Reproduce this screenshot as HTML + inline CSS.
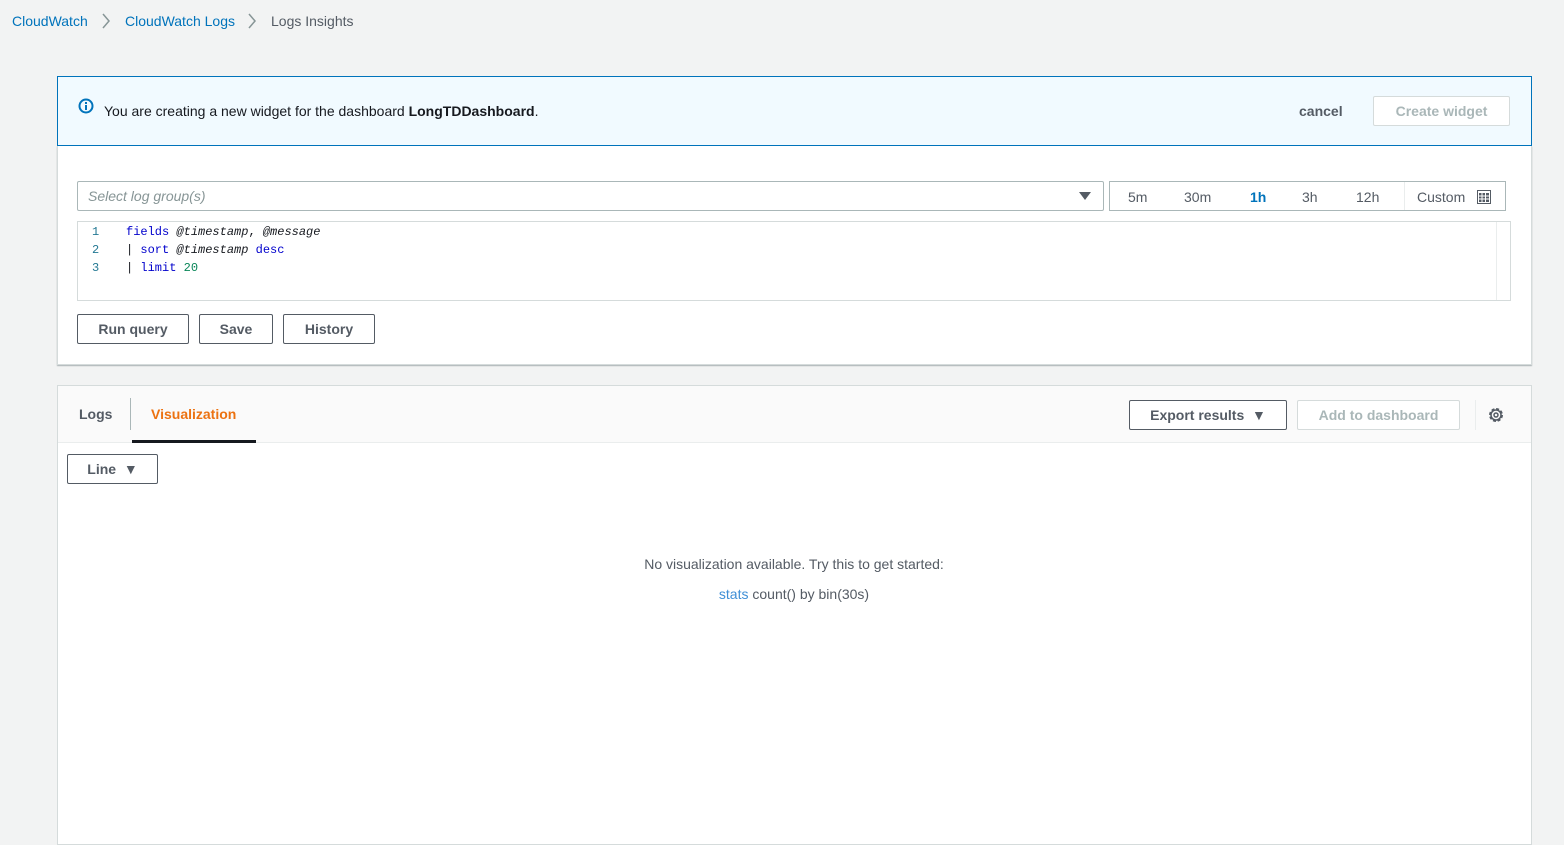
<!DOCTYPE html>
<html><head><meta charset="utf-8"><style>
*{box-sizing:border-box;margin:0;padding:0}
body{width:1564px;height:835px;background:#f2f3f3;font-family:"Liberation Sans",sans-serif;font-size:14px;color:#16191f;position:relative;overflow:hidden}
.a{position:absolute}
.blue{color:#0073bb}
.btn{position:absolute;border:1px solid #545b64;background:#fff;font-weight:bold;color:#545b64;text-align:center;font-size:14px;border-radius:2px}
.dis{border-color:#d5dbdb;color:#aab7b8}
.mono{font-family:"Liberation Mono",monospace;font-size:12px}
</style></head><body>
<div class="a blue" style="left:12px;top:13px">CloudWatch</div>
<svg class="a" style="left:101px;top:13px" width="10" height="16" viewBox="0 0 10 16"><path d="M2 1l6 7-6 7" fill="none" stroke="#879596" stroke-width="1.5"/></svg>
<div class="a blue" style="left:125px;top:13px">CloudWatch Logs</div>
<svg class="a" style="left:247px;top:13px" width="10" height="16" viewBox="0 0 10 16"><path d="M2 1l6 7-6 7" fill="none" stroke="#879596" stroke-width="1.5"/></svg>
<div class="a" style="left:271px;top:13px;color:#545b64">Logs Insights</div>

<div class="a" style="left:57px;top:76px;width:1475px;height:70px;background:#f1faff;border:1px solid #0073bb"></div>
<svg class="a" style="left:78px;top:98px" width="16" height="16" viewBox="0 0 16 16"><circle cx="8" cy="8" r="6.5" fill="none" stroke="#0073bb" stroke-width="2"/><rect x="7" y="7" width="2" height="5" fill="#0073bb"/><rect x="7" y="4" width="2" height="2" fill="#0073bb"/></svg>
<div class="a" style="left:104px;top:103px">You are creating a new widget for the dashboard <b>LongTDDashboard</b>.</div>
<div class="a" style="left:1299px;top:103px;font-weight:bold;color:#545b64">cancel</div>
<div class="btn dis" style="left:1373px;top:96px;width:137px;height:30px;line-height:28px">Create widget</div>

<div class="a" style="left:57px;top:146px;width:1475px;height:219px;background:#fff;border:1px solid #d5dbdb;border-top:none;box-shadow:0 1px 1px rgba(0,28,36,.3)"></div>
<div class="a" style="left:77px;top:181px;width:1027px;height:30px;border:1px solid #aab7b8;border-radius:2px;background:#fff"></div>
<div class="a" style="left:88px;top:188px;color:#879596;font-style:italic">Select log group(s)</div>
<div class="a" style="left:1079px;top:192px;width:0;height:0;border-left:6px solid transparent;border-right:6px solid transparent;border-top:8px solid #545b64"></div>
<div class="a" style="left:1109px;top:181px;width:397px;height:30px;border:1px solid #aab7b8;background:#fff"></div>
<div class="a" style="left:1404px;top:182px;width:1px;height:28px;background:#eaeded"></div>
<div class="a" style="left:1128px;top:189px;color:#545b64">5m</div>
<div class="a" style="left:1184px;top:189px;color:#545b64">30m</div>
<div class="a" style="left:1250px;top:189px;color:#0073bb;font-weight:bold">1h</div>
<div class="a" style="left:1302px;top:189px;color:#545b64">3h</div>
<div class="a" style="left:1356px;top:189px;color:#545b64">12h</div>
<div class="a" style="left:1417px;top:189px;color:#545b64">Custom</div>
<svg class="a" style="left:1477px;top:190px" width="14" height="14" viewBox="0 0 14 14"><rect x="0.5" y="0.5" width="13" height="13" fill="none" stroke="#545b64"/><path d="M2 3h10v9H2z" fill="#545b64"/><path d="M2 6h10M2 9h10M5 3v9M8.5 3v9" stroke="#fff" stroke-width="1"/></svg>

<div class="a" style="left:77px;top:221px;width:1434px;height:80px;border:1px solid #d5dbdb;background:#fff"></div>
<div class="a" style="left:1496px;top:222px;width:1px;height:78px;background:#eaeded"></div>
<div class="a mono" style="left:92px;top:223px;line-height:18px;color:#237893">1<br>2<br>3</div>
<div class="a mono" style="left:126px;top:223px;line-height:18px;white-space:pre"><span style="color:#00c">fields</span> <i>@timestamp</i>, <i>@message</i>
| <span style="color:#00c">sort</span> <i>@timestamp</i> <span style="color:#00c">desc</span>
| <span style="color:#00c">limit</span> <span style="color:#098658">20</span></div>

<div class="btn" style="left:77px;top:314px;width:112px;height:30px;line-height:28px">Run query</div>
<div class="btn" style="left:199px;top:314px;width:74px;height:30px;line-height:28px">Save</div>
<div class="btn" style="left:283px;top:314px;width:92px;height:30px;line-height:28px">History</div>

<div class="a" style="left:57px;top:385px;width:1475px;height:460px;background:#fff;border:1px solid #d5dbdb"></div>
<div class="a" style="left:58px;top:386px;width:1473px;height:57px;background:#fafafa;border-bottom:1px solid #eaeded"></div>
<div class="a" style="left:79px;top:406px;font-weight:bold;color:#545b64">Logs</div>
<div class="a" style="left:130px;top:398px;width:1px;height:32px;background:#aab7b8"></div>
<div class="a" style="left:151px;top:406px;font-weight:bold;color:#ec7211">Visualization</div>
<div class="a" style="left:132px;top:440px;width:124px;height:3px;background:#16191f"></div>
<div class="btn" style="left:1129px;top:400px;width:158px;height:30px;line-height:28px;color:#545b64">Export results &nbsp;&#x25BC;</div>
<div class="btn dis" style="left:1297px;top:400px;width:163px;height:30px;line-height:28px">Add to dashboard</div>
<div class="a" style="left:1475px;top:400px;width:1px;height:30px;background:#eaeded"></div>
<svg class="a" style="left:1487px;top:406px" width="18" height="18" viewBox="0 0 18 18"><circle cx="9" cy="9" r="6" fill="none" stroke="#545b64" stroke-width="2" stroke-dasharray="3 1.7"/><circle cx="9" cy="9" r="5" fill="none" stroke="#545b64" stroke-width="1.5"/><circle cx="9" cy="9" r="2" fill="none" stroke="#545b64" stroke-width="1.5"/></svg>

<div class="btn" style="left:67px;top:454px;width:91px;height:30px;line-height:28px">Line &nbsp;&#x25BC;</div>
<div class="a" style="left:0;width:1588px;top:556px;text-align:center;color:#545b64">No visualization available. Try this to get started:</div>
<div class="a" style="left:0;width:1588px;top:586px;text-align:center;color:#545b64"><span style="color:#3f8fd6">stats</span> count() by bin(30s)</div>
</body></html>
